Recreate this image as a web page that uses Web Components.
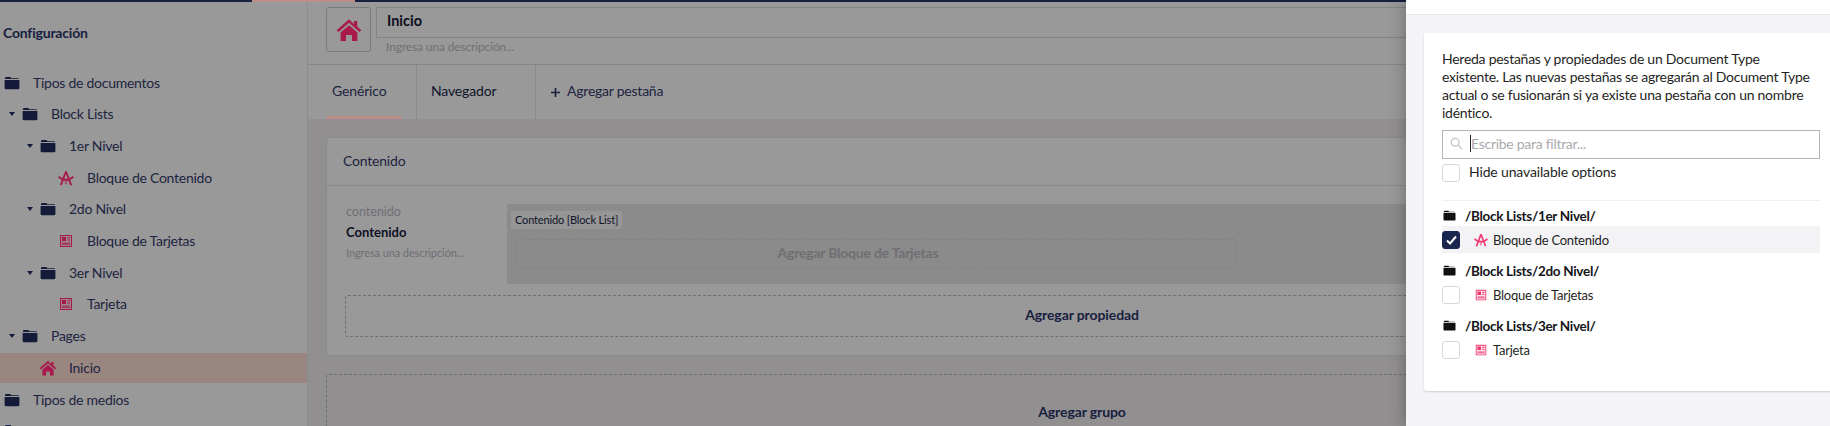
<!DOCTYPE html>
<html lang="es"><head><meta charset="utf-8"><title>Configuración</title>
<style>
html,body{margin:0;height:426px;overflow:hidden;background:#999}
body{font-family:Lato,"Open Sans",sans-serif;color:#1a2240}
</style></head><body>
<x-app>
  <x-sidebar slot="side" heading="Configuración">
    <x-tree-item level="0" icon="folder">Tipos de documentos</x-tree-item>
    <x-tree-item level="1" icon="folder" arrow>Block Lists</x-tree-item>
    <x-tree-item level="2" icon="folder" arrow>1er Nivel</x-tree-item>
    <x-tree-item level="3" icon="autofill" tone="dim">Bloque de Contenido</x-tree-item>
    <x-tree-item level="2" icon="folder" arrow>2do Nivel</x-tree-item>
    <x-tree-item level="3" icon="news" tone="dim">Bloque de Tarjetas</x-tree-item>
    <x-tree-item level="2" icon="folder" arrow>3er Nivel</x-tree-item>
    <x-tree-item level="3" icon="news" tone="dim">Tarjeta</x-tree-item>
    <x-tree-item level="1" icon="folder" arrow>Pages</x-tree-item>
    <x-tree-item level="2" icon="home" tone="dim" selected>Inicio</x-tree-item>
    <x-tree-item level="0" icon="folder">Tipos de medios</x-tree-item>
    <x-tree-item level="0" icon="folder">Tipos de miembros</x-tree-item>
  </x-sidebar>
  <x-editor slot="main">
    <x-editor-header title-text="Inicio" desc="Ingresa una descripción..."></x-editor-header>
    <x-tabs>
      <x-tab active>Genérico</x-tab>
      <x-tab strong>Navegador</x-tab>
      <x-tab add>Agregar pestaña</x-tab>
    </x-tabs>
    <x-canvas>
      <x-group-card heading="Contenido">
        <x-property alias="contenido" name="Contenido" desc="Ingresa una descripción..." editor="Contenido [Block List]" action="Agregar Bloque de Tarjetas"></x-property>
        <x-dashed-button>Agregar propiedad</x-dashed-button>
      </x-group-card>
      <x-dashed-button group>Agregar grupo</x-dashed-button>
    </x-canvas>
  </x-editor>
  <x-drawer slot="drawer">
    <x-panel>
      <x-intro>Hereda pestañas y propiedades de un Document Type existente. Las nuevas pestañas se agregarán al Document Type actual o se fusionarán si ya existe una pestaña con un nombre idéntico.</x-intro>
      <x-filter placeholder="Escribe para filtrar..."></x-filter>
      <x-check-row plain>Hide unavailable options</x-check-row>
      <x-rule></x-rule>
      <x-doc-group path="/Block Lists/1er Nivel/"><x-check-row icon="autofill" checked>Bloque de Contenido</x-check-row></x-doc-group>
      <x-doc-group path="/Block Lists/2do Nivel/"><x-check-row icon="news">Bloque de Tarjetas</x-check-row></x-doc-group>
      <x-doc-group path="/Block Lists/3er Nivel/"><x-check-row icon="news">Tarjeta</x-check-row></x-doc-group>
    </x-panel>
  </x-drawer>
</x-app>
<script>
const ICONS={
 folder:'<path d="M1 3.200C1 2.500 1.500 2 2.200 2H6c.5 0 .8.2 1 .6l.4.7h6.600c.6 0 1 .4 1 1V4H1z"/><path d="M.6 5h14.800v8c0 .7-.5 1.200-1.200 1.200H1.800C1.100 14.200.6 13.700.6 13z"/>',
 home:'<path d="M8 .8-.2 8.100l1.200 1.300L8 3.200l7 6.200 1.200-1.300-2.700-2.400V2h-2.200v2z"/><path d="M2.400 9.700 8 4.800l5.600 4.900V15.400H10v-4H6v4H2.400z"/>',
 autofill:'<path fill="none" stroke="currentColor" stroke-width="1.900" d="M8 1.500 2.800 15.200M8 1.500 13.200 15.200M.6 6.800l4.600 3h5.600l4.600-3"/><path d="M6.900 10.400h.8v3.800h-.8zm1.400 0h.8v3.800h-.8z" opacity=".7"/>',
 news:'<path fill-rule="evenodd" d="M2 2h12v12H2zm1 1v10h10V3z"/><path d="M3 3h10v10H3z" fill-opacity=".16"/><path d="M4 4h4v4H4zM9.500 4.300H12v1H9.500zm0 2.300H12v1H9.500z"/><path d="M4 9.500h8V12H4z" fill-opacity=".65"/>'
};
function def(name,css,html){
  customElements.define(name,class extends HTMLElement{
    connectedCallback(){
      if(this.shadowRoot)return;
      const r=this.attachShadow({mode:'open'});
      const a=n=>{const v=this.getAttribute(n);return v===null?'':v};
      r.innerHTML='<style>'+css+'</style>'+(typeof html==='function'?html(a,this):html);
    }
  });
}
def('x-icon',':host{display:inline-flex;width:var(--s,16px);height:var(--s,16px);flex:none}svg{width:100%;height:100%;fill:currentColor;display:block;overflow:visible}',
  a=>'<svg viewBox="0 0 16 16" aria-hidden="true">'+ICONS[a('name')]+'</svg>');
def('x-app',
  ':host{display:flex;position:relative;width:1830px;height:426px;overflow:hidden}'+
  '.bar{position:absolute;left:0;top:0;width:1406px;height:2px;background:linear-gradient(90deg,#18203f 0 252px,#bd8d89 252px 355px,#18203f 355px);z-index:1}'+
  '.side{flex:none;width:308px}.main{flex:none;width:1522px;overflow:visible}',
  '<div class="bar"></div><div class="side"><slot name="side"></slot></div><div class="main"><slot name="main"></slot></div><slot name="drawer"></slot>');
def('x-sidebar',
  ':host{display:block;box-sizing:border-box;width:308px;height:426px;background:#999;border-right:1px solid #8c8c8c;overflow:hidden}'+
  'h2{margin:0;padding:24px 0 0 3px;height:42px;font:700 14px/18px Lato,sans-serif;letter-spacing:-.2px;color:#18203f;box-sizing:content-box}'+
  '.tree{padding-top:.8px}',
  a=>'<h2>'+a('heading')+'</h2><div class="tree"><slot></slot></div>');
def('x-tree-item',
  ':host{display:flex;align-items:center;box-sizing:border-box;height:31.700px;font:400 14px/20px Lato,sans-serif;letter-spacing:-.26px;color:#1d2440;position:relative;padding-left:calc(var(--l)*18px + 4px);white-space:nowrap}'+
  ':host([selected]){background:#9a8681;height:30px;margin:1px 0 .7px}'+
  '.arrow{position:absolute;left:calc(var(--l)*18px - 9px);top:50%;margin-top:-2px;border:3.500px solid transparent;border-top:4.500px solid #141b38;border-bottom:0}'+
  'x-icon{margin-right:13px;color:#141b38}.dim{color:#a81a4b}',
  (a,h)=>{h.style.setProperty('--l',a('level'));
    return (h.hasAttribute('arrow')?'<i class="arrow"></i>':'')+'<x-icon name="'+a('icon')+'" class="'+(a('tone')||'')+'"></x-icon><span><slot></slot></span>'});
def('x-editor',':host{display:block;width:1530px;height:426px;background:#999}','<slot></slot>');
def('x-editor-header',
  ':host{display:flex;box-sizing:border-box;height:65px;padding:7px 0 0 18px;gap:5px;border-bottom:1px solid #878787}'+
  '.ico{box-sizing:border-box;width:45px;height:45px;border:1px solid #7a7a7a;border-radius:3px;display:flex;align-items:center;justify-content:center;color:#a81a4b;--s:24px}'+
  '.f{flex:1}.t{box-sizing:border-box;height:31px;border:1px solid #838383;padding-left:10px;font:700 14.500px/25px Lato,sans-serif;color:#0b0e1c}'+
  '.d{font:400 12px/17px Lato,sans-serif;letter-spacing:-.14px;color:#6f6f75;padding:0 0 0 10px}',
  a=>'<div class="ico"><x-icon name="home"></x-icon></div><div class="f"><div class="t">'+a('title-text')+'</div><div class="d">'+a('desc')+'</div></div>');
def('x-tabs',':host{display:flex;height:54px;padding-left:0}','<slot></slot>');
def('x-tab',
  ':host{display:flex;align-items:center;box-sizing:border-box;position:relative;height:54px;font:400 14px/18px Lato,sans-serif;letter-spacing:-.15px;color:#1d2440;border-right:1px solid #8a8a8a;padding:0 14px 2px;white-space:nowrap}'+
  ':host(:first-child){width:109px;padding-left:24px}'+
  ':host([strong]){width:119px;color:#10142a}'+
  ':host([add]){border:0;padding-left:15px;letter-spacing:-.23px}'+
  '.u{position:absolute;left:18px;width:76px;bottom:0;height:3px;background:#bd8d89;border-radius:2px 2px 0 0}'+
  'svg{width:9px;height:9px;margin-right:7px;fill:#18203f;position:relative;top:1px}',
  (a,h)=>(h.hasAttribute('active')?'<i class="u"></i>':'')+(h.hasAttribute('add')?'<svg viewBox="0 0 9 9"><path d="M3.700 0h1.600v3.700H9v1.600H5.300V9H3.700V5.300H0V3.700h3.700z"/></svg>':'')+'<slot></slot>');
def('x-canvas',':host{display:block;box-sizing:border-box;height:307px;background:#918f8f;padding:18px 0 0 18px}','<slot></slot>');
def('x-group-card',
  ':host{display:block;box-sizing:border-box;width:1512px;height:219px;background:#999;border:1px solid #8b8b8b;border-radius:3px;margin-bottom:18px}'+
  'h3{margin:0;box-sizing:border-box;height:48px;border-bottom:1px solid #8b8b8b;padding-left:16px;font:400 14px/46px Lato,sans-serif;letter-spacing:-.2px;color:#1d2440}'+
  '.b{padding:18px 18px 0}',
  a=>'<h3>'+a('heading')+'</h3><div class="b"><slot></slot></div>');
def('x-property',
  ':host{display:flex;height:80px;margin-bottom:11px}'+
  '.l{box-sizing:border-box;width:162px;padding-left:1px;flex:none;font:400 11px/17px Lato,sans-serif;letter-spacing:-.1px;color:#6f6f75;margin-top:-1px}.a{font-size:12.500px;letter-spacing:0}'+
  '.n{font:700 13px/18px Lato,sans-serif;letter-spacing:0;color:#0d1124;margin:3px 0 3px}'+
  '.p{flex:1;background:#8b8b8b;border-radius:3px;padding:4px;box-sizing:border-box}'+
  '.lab{display:inline-block;background:#969696;border-radius:3px;padding:0 4px;font:400 11px/18px Lato,sans-serif;letter-spacing:-.15px;color:#10142a}'+
  '.act{box-sizing:border-box;width:720px;height:29px;margin:10px 0 0 5px;border:1px dashed #828282;border-radius:2px;text-align:center;padding-right:36px;font:700 14px/26px Lato,sans-serif;letter-spacing:-.23px;color:#6f6f73}',
  a=>'<div class="l"><div class="a">'+a('alias')+'</div><div class="n">'+a('name')+'</div><div>'+a('desc')+'</div></div><div class="p"><div class="lab">'+a('editor')+'</div><div class="act">'+a('action')+'</div></div>');
def('x-dashed-button',
  ':host{display:flex;align-items:center;justify-content:center;box-sizing:border-box;height:42px;padding-bottom:2px;border:1px dashed #6e6e6e;border-radius:3px;font:700 14px/18px Lato,sans-serif;letter-spacing:-.1px;color:#18203f}'+
  ':host([group]){width:1512px;height:76px;padding-bottom:0}',
  '<slot></slot>');
def('x-drawer',
  ':host{position:absolute;left:1406px;top:0;z-index:2;box-sizing:border-box;width:424px;height:426px;background:#f4f3f5;box-shadow:0 0 16px rgba(0,0,0,.32)}'+
  '.h{height:14px;background:#fff;border-bottom:1px solid #e9e9eb}.c{padding:18px 0 0 18px}',
  '<div class="h"></div><div class="c"><slot></slot></div>');
def('x-panel',
  ':host{display:block;box-sizing:border-box;width:420px;height:358px;background:#fff;border-radius:3px;box-shadow:0 1px 2px rgba(0,0,0,.16);padding:17px 0 0 18px}',
  '<slot></slot>');
def('x-intro',':host{display:block;width:370px;font:400 14px/18px Lato,sans-serif;letter-spacing:-.26px;color:#1f1f24}','<slot></slot>');
def('x-filter',
  ':host{display:flex;align-items:center;box-sizing:border-box;width:378px;height:29px;margin-top:8px;border:1px solid #b5b5b8;font:400 14px/18px Lato,sans-serif;letter-spacing:-.28px;color:#a9a9ae;padding:0 0 2px 7px}'+
  'svg{width:13px;height:13px;margin-right:7px;flex:none;fill:none;stroke:#c6c6ca;stroke-width:1.300}'+
  '.c{width:1px;height:17px;background:#222}',
  a=>'<svg viewBox="0 0 13 13"><circle cx="5.200" cy="5.200" r="3.900"/><path d="m8.200 8.200 4 4"/></svg><i class="c"></i><span>'+a('placeholder')+'</span>');
def('x-check-row',
  ':host{display:flex;align-items:center;box-sizing:border-box;width:378px;height:27px;font:400 13px/18px Lato,sans-serif;letter-spacing:-.25px;color:#1f1f24}'+
  ':host([checked]){background:#f3f3f5}'+
  ':host([plain]){height:18px;margin-top:5px;font-size:14px;letter-spacing:-.15px}'+
  '.b{box-sizing:border-box;flex:none;width:18px;height:18px;border:1px solid #d8d8dc;border-radius:3px;background:#fff;display:flex;align-items:center;justify-content:center}'+
  ':host([checked]) .b{background:#1b264f;border-color:#1b264f}'+
  'svg{width:11px;height:10px;fill:none;stroke:#fff;stroke-width:2}'+
  'x-icon{--s:14px;margin:0 5px 0 14px;color:#f2386f}.s{margin-left:9px}:host(:not([plain])) .s{margin-left:0}:host([plain]) .s{position:relative;top:-1px}',
  (a,h)=>'<span class="b">'+(h.hasAttribute('checked')?'<svg viewBox="0 0 11 10"><path d="m1 5.500 3 3 6-7"/></svg>':'')+'</span>'+(a('icon')?'<x-icon name="'+a('icon')+'"></x-icon>':'')+'<span class="s"><slot></slot></span>');
def('x-rule',':host{display:block;width:378px;height:1px;background:#f0f0f2;margin:18px 0 7px}','');
def('x-doc-group',
  ':host{display:block;width:378px;height:55px}'+
  '.h{display:flex;align-items:center;height:17px;font:700 13.500px/17px Lato,sans-serif;letter-spacing:-.3px;color:#15151a}'+
  'x-icon{--s:13px;margin:-2px 9px 0 1px;color:#111}.r{padding-top:1px}',
  a=>'<div class="h"><x-icon name="folder"></x-icon>'+a('path')+'</div><div class="r"><slot></slot></div>');
</script>
</body></html>
